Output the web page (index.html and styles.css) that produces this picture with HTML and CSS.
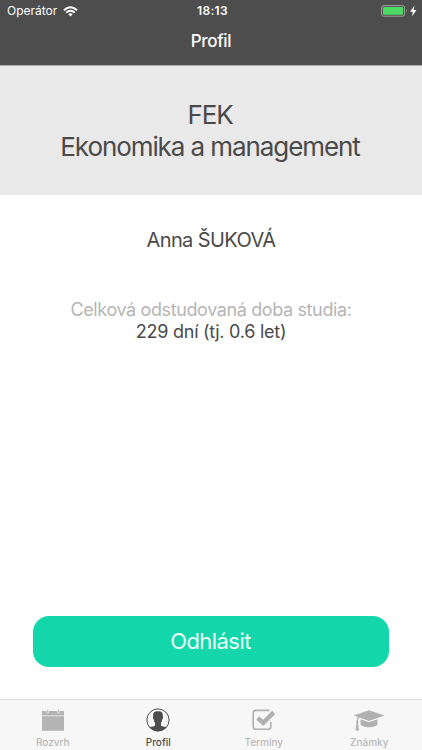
FILE: index.html
```html
<!DOCTYPE html>
<html lang="cs">
<head>
<meta charset="utf-8">
<title>Profil</title>
<link rel="stylesheet" href="styles.css">
</head>
<body>
<div class="app">
  <header class="top">
    <div class="status">
      <div class="carrier">
        <span>Operátor</span>
        <svg class="wifi" width="15" height="11" viewBox="0 0 15 11"><g fill="none" stroke="#fff" stroke-width="1.9"><path d="M.9 4.2Q7.5-1.7 14.1 4.2"/><path d="M3.2 6.6Q7.5 2.8 11.8 6.6"/></g><path d="M5.2 8.1Q7.5 6.3 9.8 8.1L7.5 10.5Z" fill="#fff"/></svg>
      </div>
      <span class="clock">18:13</span>
      <svg class="battery" width="37" height="12" viewBox="0 0 37 12"><rect x=".6" y=".6" width="23" height="10.6" rx="2.3" fill="none" stroke="#a0a19f" stroke-width="1"/><rect x="2" y="2" width="20.2" height="7.8" rx="1" fill="#4cd964"/><path d="M25 4Q26.5 5.9 25 7.8Z" fill="#a0a19f"/><path d="M33.6 .6L29 6.8H31.9L30.9 11.4L35.5 5H32.6Z" fill="#fff"/></svg>
    </div>
    <h1 class="title">Profil</h1>
  </header>
  <section class="faculty"><span class="code">FEK</span><span class="field">Ekonomika a management</span></section>
  <main class="content">
    <p class="name">Anna ŠUKOVÁ</p>
    <p class="label">Celková odstudovaná doba studia:</p>
    <p class="value">229 dní (tj. 0.6 let)</p>
    <button class="logout">Odhlásit</button>
  </main>
  <nav class="tabs">
    <a class="tab"><svg width="24" height="24" viewBox="0 0 24 24" fill="#b4b4b4"><path d="M1 3H5.7V5.2H7.7V3H16.3V5.2H18.3V3H23V7.5H1Z"/><path d="M6.2 1.5H7.2V4.7H6.2ZM16.8 1.5H17.8V4.7H16.8ZM1 8.2H23V22.7H1Z"/></svg><span>Rozvrh</span></a>
    <a class="tab active"><svg width="24" height="24" viewBox="0 0 24 24"><circle cx="12" cy="12" r="11.1" fill="#f7f7f7" stroke="#4d4d4d" stroke-width="1"/><path d="M12 3.2C8 3.2 6.9 5 7.2 8.5C6.6 9 7.1 11.2 7.8 11.7C8.1 13.2 8.4 14.2 9 14.8V17.5C8.2 18.8 5.2 18.6 3.5 19.2A11.1 11.1 0 0 0 20.5 19.2C18.8 18.6 15.8 18.8 15 17.5V14.8C15.6 14.2 15.9 13.2 16.2 11.7C16.9 11.2 17.4 9 16.8 8.5C17.1 5 16 3.2 12 3.2Z" fill="#4d4d4d"/></svg><span>Profil</span></a>
    <a class="tab"><svg width="24" height="24" viewBox="0 0 24 24"><path d="M17.5 2.4H4Q1.2 2.4 1.2 5.2V18.4Q1.2 21.2 4 21.2H16Q18.8 21.2 18.8 18.4V14" fill="none" stroke="#b0b0b0" stroke-width="1.6"/><path d="M5.8 10L11.2 14.9L21.7 4.4" fill="none" stroke="#b0b0b0" stroke-width="4.4"/></svg><span>Termíny</span></a>
    <a class="tab"><svg width="32" height="24" viewBox="0 0 32 24" fill="#b0b0b0"><path d="M16 2.2L31.5 7.6L16 13L6.3 9.6Q5 10.8 4.9 13Q6.2 14.2 5 15.5L6 22.6H2.4L3.5 15.5Q2.4 14.2 3.6 13Q3.7 10.5 5 9.1L.5 7.6Z"/><path d="M7.6 11.3L16 14.3L24.4 11.3V16.7C22 20 10 20 7.6 16.7Z"/></svg><span>Známky</span></a>
  </nav>
</div>
</body>
</html>
```
FILE: styles.css
```css
* { box-sizing: border-box; }
body { margin: 0; font-family: Inter, "Liberation Sans", sans-serif; color: #4a4a4a; background: #fff; }
p, h1 { margin: 0; }
svg { display: block; flex: none; }
.app { width: 422px; height: 750px; display: flex; flex-direction: column; overflow: hidden; }
.top { height: 66px; flex: none; background: #4d4d4d; border-bottom: 1px solid #b0b0b0; color: #fff; }
.status { height: 22px; display: grid; grid-template-columns: 1fr auto 1fr; align-items: center; padding: 0 4px 0 7px; font-size: 12px; line-height: 22px; }
.carrier { display: flex; align-items: center; gap: 6px; }
.clock { font-weight: 600; letter-spacing: 0.35px; }
.battery { justify-self: end; }
.title { font-size: 17px; line-height: 38px; font-weight: 500; letter-spacing: -0.35px; text-align: center; }
.faculty { height: 129px; flex: none; background: #e9e9e9; padding: 33px 2px 0 0; display: flex; flex-direction: column; align-items: center; font-size: 26px; line-height: 32px; letter-spacing: -1.08px; }
.content { flex: 1; display: flex; flex-direction: column; align-items: center; padding: 33px 33px 0; }
.name { font-size: 20px; line-height: 24px; letter-spacing: -0.6px; }
.label { margin-top: 47px; font-size: 18px; line-height: 22px; letter-spacing: -0.38px; color: #b5b5b5; }
.value { font-size: 18px; line-height: 22px; letter-spacing: -0.25px; }
.logout { margin: auto 0 32px; width: 356px; height: 51px; border: 0; border-radius: 16px; background: #14d6ab; color: #e9fff8; font: 22px/51px Inter, "Liberation Sans", sans-serif; letter-spacing: -0.55px; padding: 0 1px 0 0; }
.tabs { height: 51px; flex: none; background: #f7f7f7; border-top: 1px solid #dedede; display: grid; grid-template-columns: repeat(4, 1fr); }
.tab { display: flex; flex-direction: column; align-items: center; padding-top: 8px; font-size: 10px; line-height: 14px; font-weight: 500; color: #b8b8b8; }
.tab span { margin-top: 3px; }
.active { color: #4d4d4d; }
```
